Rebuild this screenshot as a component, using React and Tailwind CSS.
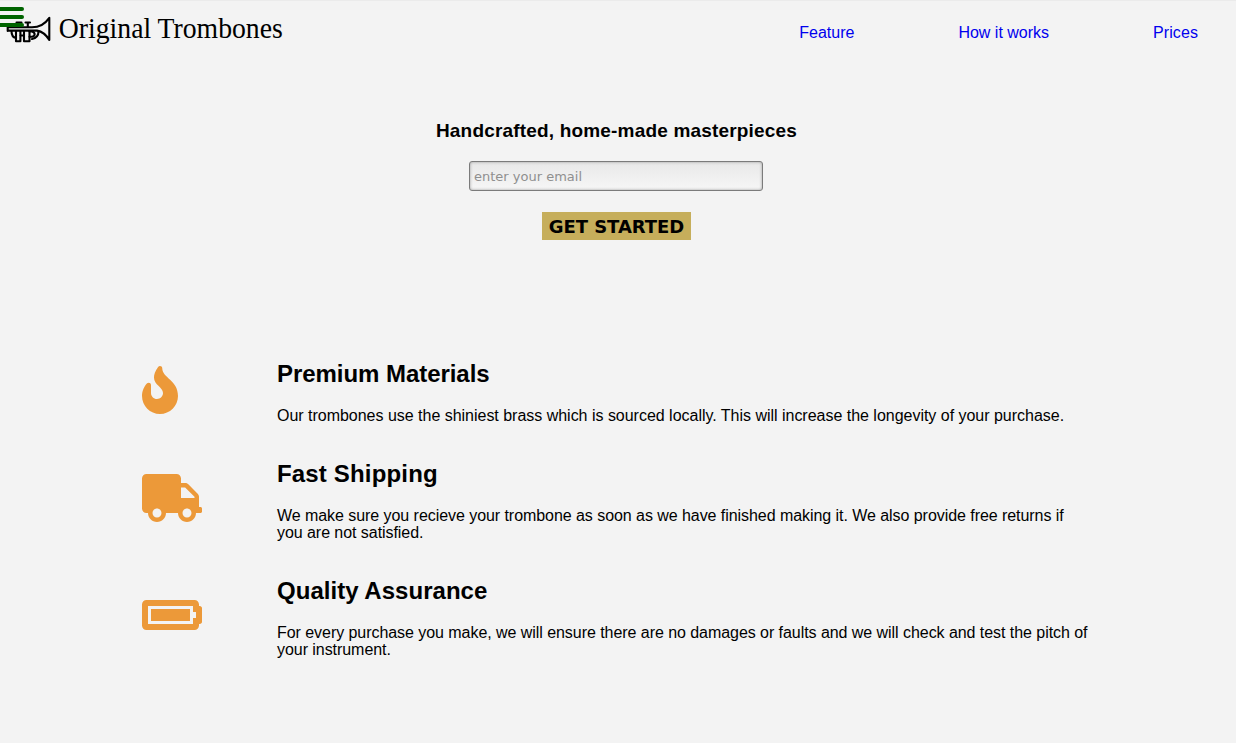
import { FaFire, FaTruck, FaBatteryFull } from "react-icons/fa";

const features = [
  {
    title: "Premium Materials",
    titleClass: "tracking-[-0.05px]",
    Icon: FaFire,
    iconClass: "w-9",
    row: "h-[100px]",
    iconPad: "pt-[16px]",
    text: "Our trombones use the shiniest brass which is sourced locally. This will increase the longevity of your purchase.",
    textClass: "tracking-[-0.018px]",
  },
  {
    title: "Fast Shipping",
    titleClass: "tracking-[0.17px]",
    Icon: FaTruck,
    iconClass: "w-15",
    row: "h-[117px]",
    iconPad: "pt-[24px]",
    text: "We make sure you recieve your trombone as soon as we have finished making it. We also provide free returns if you are not satisfied.",
    textClass: "tracking-[-0.055px]",
  },
  {
    title: "Quality Assurance",
    titleClass: "tracking-[0.03px]",
    Icon: FaBatteryFull,
    iconClass: "w-15",
    row: "h-[117px]",
    iconPad: "pt-[24px]",
    text: "For every purchase you make, we will ensure there are no damages or faults and we will check and test the pitch of your instrument.",
    textClass: "tracking-[-0.052px]",
  },
];

function Logo() {
  return (
    <svg className="block overflow-visible" width="300" height="60" viewBox="0 0 300 60">
      <g fill="none" stroke="#000" strokeWidth="2.1" strokeLinejoin="round" strokeLinecap="round">
        <path d="M7.700 26v5M8 27.300H32C40 27.300 45 24 49.300 17.800V40C46 34.500 42.500 31.500 37 30.600H8" />
        <path d="M16.500 22.500h5M25.500 22.500h4.500M19 23v4M27.800 23v4" />
        <path d="M11.500 31c0 4 1.500 6.500 4.500 7M38.500 31.500c0 4-2 6.500-6.500 7.500" />
        <path d="M16 31v10.300h4.400V31M24 31v10.300h5.500V31M20.200 35.500h3.800" />
        <path d="M29.500 31.500h2.500c3.500 1 3.500 4.500 0 5.200h-2.500" />
      </g>
      <text
        x="58.800"
        y="38"
        fontSize="30"
        textLength="224"
        lengthAdjust="spacingAndGlyphs"
        className="font-['Liberation_Serif',serif]"
      >
        Original Trombones
      </text>
    </svg>
  );
}

export default function App() {
  return (
    <div className="h-[743px] overflow-hidden border-t border-[#ebebeb] bg-[#f3f3f3] font-['Liberation_Sans',sans-serif] text-base leading-[17px] text-black">
      <header className="relative flex h-[60px] justify-between pr-[38px]">
        <div className="-mt-px">
          <Logo />
        </div>
        <nav className="flex gap-[104px] pt-[23px] text-[#0000ee]">
          <a href="#feature">Feature</a>
          <a href="#how">How it works</a>
          <a href="#prices" className="tracking-[0.08px]">Prices</a>
        </nav>
        <button aria-label="Menu" className="absolute top-[6px] left-0 flex w-6 flex-col gap-1">
          <span className="h-1 rounded-r-sm bg-[#006400]" />
          <span className="h-1 rounded-r-sm bg-[#006400]" />
          <span className="h-1 rounded-r-sm bg-[#006400]" />
        </button>
      </header>

      <form className="flex h-[289px] flex-col items-center pt-[59px] pr-1">
        <h3 className="pl-px text-[19px] leading-[21px] font-bold tracking-[0.18px]">Handcrafted, home-made masterpieces</h3>
        <input
          type="email"
          placeholder="enter your email"
          className="mt-[20px] h-[30px] w-[294px] rounded-[3px] border border-[#7b7b7b] bg-linear-to-b from-[#e8e8e8] to-[#f6f6f6] px-1 font-['DejaVu_Sans',sans-serif] text-[13px] shadow-[inset_0_0_3px_#999999] placeholder:text-[#8f8f8f]"
        />
        <button
          type="button"
          className="mt-[21px] h-[28px] w-[149px] bg-[#c6ae5b] pl-px font-['DejaVu_Sans',sans-serif] text-[18px] font-bold tracking-[-0.04px] whitespace-nowrap"
        >
          GET STARTED
        </button>
      </form>

      <main className="pl-[142px]">
        {features.map(({ title, titleClass, Icon, iconClass, row, iconPad, text, textClass }) => (
          <section key={title} className={`flex ${row}`}>
            <div className={`w-[135px] shrink-0 ${iconPad}`}>
              <Icon className={`h-12 text-[#ec9939] ${iconClass}`} />
            </div>
            <div className="w-[816px] pt-[10px]">
              <h2 className={`text-2xl leading-[27px] font-bold ${titleClass}`}>{title}</h2>
              <p className={`mt-[20px] ${textClass}`}>{text}</p>
            </div>
          </section>
        ))}
      </main>
    </div>
  );
}
